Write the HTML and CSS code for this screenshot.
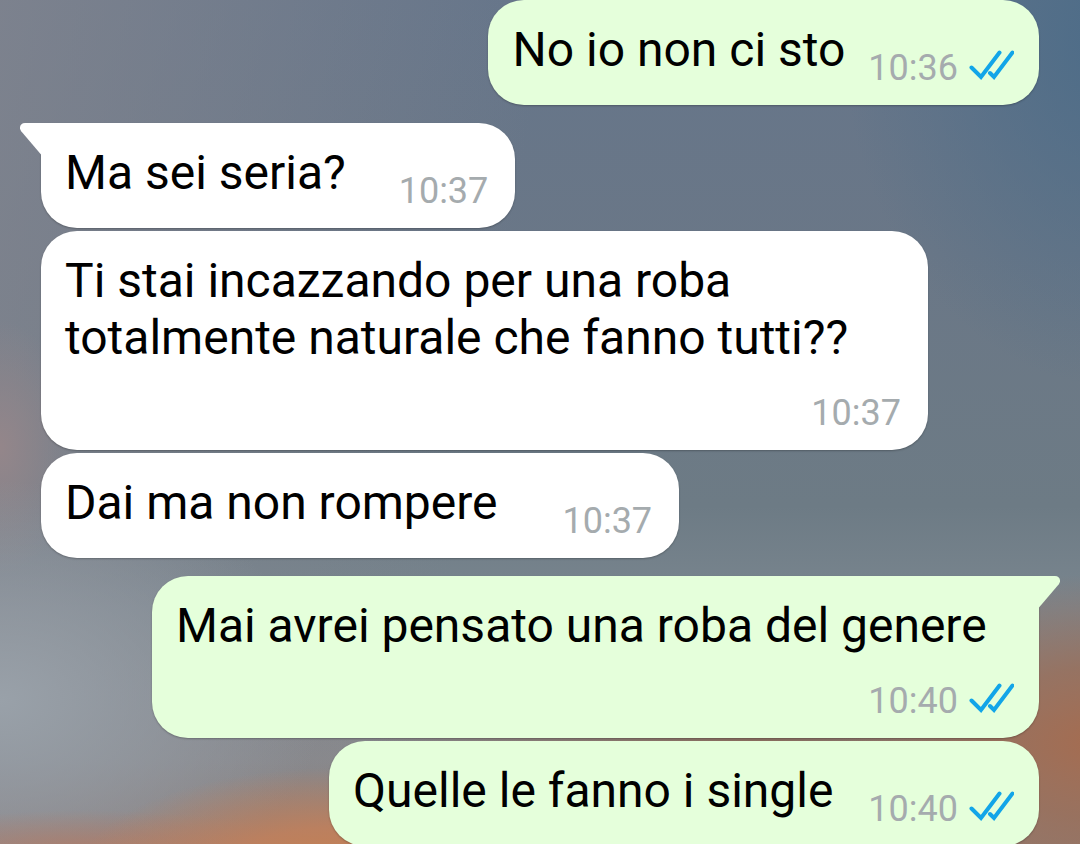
FILE: index.html
```html
<!DOCTYPE html>
<html lang="it">
<head>
  <meta charset="UTF-8" />
  <meta name="viewport" content="width=device-width, initial-scale=1.0"/>
  <title>Chat</title>
  <link rel="stylesheet" href="styles.css">
</head>
<body>
  <!-- shared icons -->
  <svg class="sprite" aria-hidden="true">
    <symbol id="ticks" viewBox="0 0 45 38">
      <path d="M2.500 18.500 L12 28 L30.500 3.500" />
      <path d="M21 24 L25 28 L43.500 3.500" />
    </symbol>
    <symbol id="tail" viewBox="0 0 22 32">
      <path d="M22 0 H5 C0.500 0 -1.500 4.500 1.200 8.200 L21 31.500 H22 Z" />
    </symbol>
  </svg>
  <main class="chat">
    <div class="message sent">
      <span class="text">No io non ci sto</span>
      <span class="meta"><time>10:36</time><svg class="ticks"><use href="#ticks"/></svg></span>
    </div>

    <div class="message received first">
      <svg class="tail"><use href="#tail"/></svg>
      <span class="text">Ma sei seria?</span>
      <span class="meta"><time>10:37</time></span>
    </div>
    <div class="message received">
      <span class="text">Ti stai incazzando per una roba totalmente naturale che fanno tutti??</span>
      <span class="meta"><time>10:37</time></span>
    </div>
    <div class="message received">
      <span class="text">Dai ma non rompere&nbsp;</span>
      <span class="meta"><time>10:37</time></span>
    </div>

    <div class="message sent first">
      <svg class="tail"><use href="#tail"/></svg>
      <span class="text">Mai avrei pensato una roba del genere</span>
      <span class="meta"><time>10:40</time><svg class="ticks"><use href="#ticks"/></svg></span>
    </div>
    <div class="message sent">
      <span class="text">Quelle le fanno i single&nbsp;</span>
      <span class="meta"><time>10:40</time><svg class="ticks"><use href="#ticks"/></svg></span>
    </div>
  </main>
</body>
</html>
```

FILE: styles.css
```css
* { box-sizing: border-box; }
html { height: 100%; }
body {
  margin: 0;
  height: 100%;
  overflow: hidden;
  font-family: Roboto, sans-serif;
  color: #000;
  background:
    radial-gradient(ellipse 24% 13% at 31% 104%, #c8804f 0%, rgba(192,128,92,0.9) 45%, rgba(155,135,130,0) 100%),
    radial-gradient(ellipse 22% 5% at 8% 101%, rgba(176,124,104,0.9) 0%, rgba(150,140,140,0) 100%),
    radial-gradient(ellipse 24% 20% at 102% 88%, #a56c50 0%, rgba(155,110,88,0.8) 45%, rgba(125,118,115,0) 100%),
    radial-gradient(ellipse 36% 6% at 70% 88%, rgba(140,108,90,0.9) 0%, rgba(130,115,110,0) 100%),
    radial-gradient(ellipse 30% 26% at 0% 83%, #99a1a9 0%, rgba(145,154,162,0) 100%),
    radial-gradient(ellipse 7% 15% at 0% 53%, #94868a 0%, rgba(140,136,142,0) 100%),
    radial-gradient(ellipse 26% 42% at 104% 4%, #4c6c88 0%, rgba(86,110,130,0) 100%),
    linear-gradient(100deg, rgba(132,134,143,0.75) 0%, rgba(110,120,135,0) 45%),
    linear-gradient(to bottom, #65758a 0%, #6a7787 30%, #6d7b85 60%, #7a868f 72%, #89898c 90%, #8f7c74 100%);
}
.sprite { display: none; }
.chat {
  display: flex;
  flex-direction: column;
  gap: 3px;
  padding: 0 41px;
}
.message {
  position: relative;
  display: flex;
  flex-wrap: wrap;
  justify-content: flex-end;
  align-items: flex-end;
  gap: 15px 23px;
  max-width: calc(100% - 111px);
  padding: 21px 25px 16px 24px;
  border-radius: 36px;
  box-shadow: 0 1px 2px rgba(0,0,0,0.25);
}
.message.first { margin-top: 15px; }
.sent {
  align-self: flex-end;
  background: #e5ffdb;
}
.received {
  align-self: flex-start;
  column-gap: 53px;
  padding-right: 27px;
  background: #fff;
}
.sent.first { border-top-right-radius: 0; }
.received.first { border-top-left-radius: 0; }
.text {
  margin-right: auto;
  margin-bottom: 11px;
  font-size: 48px;
  line-height: 57px;
}
.meta {
  display: flex;
  align-items: center;
  gap: 11px;
  font-size: 36px;
  line-height: 42px;
  color: #a5abae;
}
.ticks {
  width: 45px;
  height: 38px;
  fill: none;
  stroke: #12a5e8;
  stroke-width: 4px;
  stroke-linecap: round;
}
.tail {
  position: absolute;
  top: 0;
  right: 100%;
  width: 22px;
  height: 32px;
  margin-right: -1px;
  fill: #fff;
}
.sent .tail {
  right: auto;
  left: 100%;
  margin: 0 0 0 -1px;
  fill: #e5ffdb;
  transform: scaleX(-1);
}
```
